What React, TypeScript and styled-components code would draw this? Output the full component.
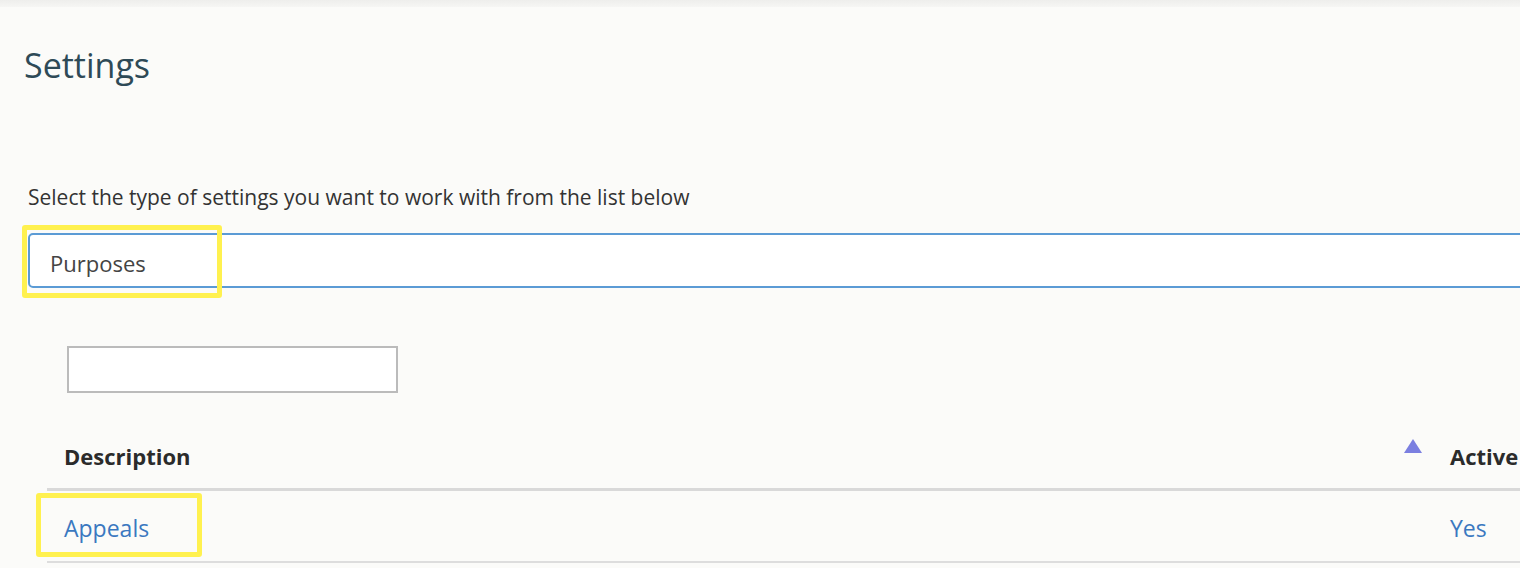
import React from "react";
import styled, { createGlobalStyle } from "styled-components";

const Global = createGlobalStyle`
  html, body { margin: 0; padding: 0; background: #fbfbf9; }
  body { font-family: "Open Sans", "Noto Sans", sans-serif; overflow: hidden; }
`;

const Page = styled.div`
  width: 1520px;
  height: 568px;
  overflow: hidden;
  background: #fbfbf9;
`;

const TopStrip = styled.div`
  height: 7px;
  background: linear-gradient(#eeeeec, #f6f6f4);
`;

const Main = styled.main`
  display: flex;
  flex-direction: column;
  padding-left: 24px;
`;

const Title = styled.h1`
  margin: 38px 0 0 0;
  font-size: 34px;
  line-height: 40px;
  font-weight: 400;
  color: #2e4a57;
`;

const Label = styled.label`
  margin: 99px 0 0 4px;
  font-size: 21px;
  line-height: 26px;
  color: #333333;
`;

const SelectWrap = styled.div`
  position: relative;
  margin: 23px -40px 0 4px;
`;

const SelectBox = styled.div`
  height: 51px;
  box-sizing: content-box;
  border: 2px solid #5b9bd5;
  border-radius: 5px;
  background: #ffffff;
  display: flex;
  align-items: center;
  padding-left: 20px;
  font-size: 22px;
  line-height: 30px;
  color: #444444;
`;

const SelectText = styled.span`
  padding-top: 4px;
`;

const Highlight = styled.div<{ $left: number; $top: number; $w: number; $h: number }>`
  position: absolute;
  left: ${(p) => p.$left}px;
  top: ${(p) => p.$top}px;
  width: ${(p) => p.$w}px;
  height: ${(p) => p.$h}px;
  border: 5px solid #fff14f;
  border-radius: 3px;
  box-sizing: border-box;
  pointer-events: none;
`;

const SearchInput = styled.input`
  margin: 58px 0 0 43px;
  width: 331px;
  height: 47px;
  box-sizing: border-box;
  border: 2px solid #bbbbbb;
  background: #ffffff;
  outline: none;
`;

const Table = styled.div`
  margin: 31px -40px 0 23px;
  display: flex;
  flex-direction: column;
`;

const Row = styled.div<{ $header?: boolean }>`
  display: grid;
  grid-template-columns: 1386px 1fr;
  height: ${(p) => (p.$header ? 64 : 70)}px;
  border-bottom: ${(p) => (p.$header ? "3px solid #d9d9d9" : "2px solid #dddddd")};
  position: relative;
`;

const Cell = styled.div<{ $header?: boolean; $link?: boolean }>`
  display: flex;
  align-items: center;
  justify-content: space-between;
  padding: ${(p) => (p.$header ? "0" : "3px")} 11px 0 17px;
  font-size: ${(p) => (p.$header ? 22 : 23)}px;
  font-weight: ${(p) => (p.$header ? 700 : 400)};
  color: ${(p) => (p.$link ? "#3a78c0" : "#2b2b2b")};
`;

const SortArrow = styled.span`
  width: 0;
  height: 0;
  border-left: 9px solid transparent;
  border-right: 9px solid transparent;
  border-bottom: 14px solid #7b7fe0;
  margin-top: -20px;
`;

export default function App() {
  return (
    <Page>
      <Global />
      <TopStrip />
      <Main>
        <Title>Settings</Title>
        <Label>Select the type of settings you want to work with from the list below</Label>
        <SelectWrap>
          <SelectBox>
            <SelectText>Purposes</SelectText>
          </SelectBox>
          <Highlight $left={-6} $top={-8} $w={200} $h={73} />
        </SelectWrap>
        <SearchInput aria-label="filter" />
        <Table>
          <Row $header>
            <Cell $header>
              Description
              <SortArrow />
            </Cell>
            <Cell $header>Active</Cell>
          </Row>
          <Row>
            <Cell $link>Appeals</Cell>
            <Cell $link>Yes</Cell>
            <Highlight $left={-11} $top={2} $w={166} $h={64} />
          </Row>
        </Table>
      </Main>
    </Page>
  );
}
